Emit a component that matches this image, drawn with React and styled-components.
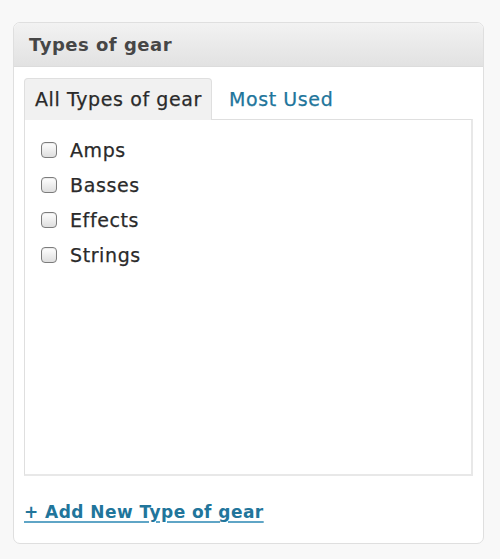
import React, { useState } from 'react';
import styled, { createGlobalStyle } from 'styled-components';

const GlobalStyle = createGlobalStyle`
  html, body {
    margin: 0;
    padding: 0;
    background: #f8f8f8;
  }
  body {
    font-family: "DejaVu Sans", Verdana, sans-serif;
    color: #333;
  }
`;

const terms = ['Amps', 'Basses', 'Effects', 'Strings'];

const App = () => {
  const [tab, setTab] = useState('all');
  const [checked, setChecked] = useState({});

  const toggle = (name) =>
    setChecked((prev) => ({ ...prev, [name]: !prev[name] }));

  return (
    <>
      <GlobalStyle />
      <Page>
        <Panel>
          <Header>Types of gear</Header>
          <Body>
            <Tabs>
              <Tab active={tab === 'all'} onClick={() => setTab('all')}>
                All Types of gear
              </Tab>
              <Tab active={tab === 'pop'} onClick={() => setTab('pop')}>
                Most Used
              </Tab>
            </Tabs>
            <TermBox>
              <TermList>
                {terms.map((name) => (
                  <li key={name}>
                    <TermLabel>
                      <Check
                        type="checkbox"
                        checked={!!checked[name]}
                        onChange={() => toggle(name)}
                      />
                      {name}
                    </TermLabel>
                  </li>
                ))}
              </TermList>
            </TermBox>
            <AddLink href="#">+ Add New Type of gear</AddLink>
          </Body>
        </Panel>
      </Page>
    </>
  );
};

const Page = styled.div`
  padding: 22px 16px 15px 13px;
`;

const Panel = styled.div`
  width: 471px;
  height: 522px;
  box-sizing: border-box;
  border: 1px solid #dfdfdf;
  border-radius: 7px;
  background: #fff;
  overflow: hidden;
  display: flex;
  flex-direction: column;
`;

const Header = styled.h3`
  margin: 0;
  height: 44px;
  box-sizing: border-box;
  padding: 0 15px;
  display: flex;
  align-items: center;
  font-size: 18px;
  letter-spacing: 0.5px;
  font-weight: bold;
  color: #464646;
  background: linear-gradient(to bottom, #f2f2f2, #e2e2e2);
  border-bottom: 1px solid #dcdcdc;
`;

const Body = styled.div`
  padding: 11px 10px 0;
  display: flex;
  flex-direction: column;
`;

const Tabs = styled.ul`
  display: flex;
  gap: 6px;
  margin: 0;
  padding: 0;
  list-style: none;
  position: relative;
  z-index: 1;
`;

const Tab = styled.li`
  height: 42px;
  box-sizing: border-box;
  padding: 0 9px 1px 10px;
  display: flex;
  align-items: center;
  font-size: 19px;
  letter-spacing: 0.6px;
  -webkit-text-stroke: 0.25px currentColor;
  cursor: pointer;
  border: 1px solid ${({ active }) => (active ? '#dfdfdf' : 'transparent')};
  border-bottom: none;
  border-radius: 4px 4px 0 0;
  background: ${({ active }) => (active ? '#f1f1f1' : 'transparent')};
  color: ${({ active }) => (active ? '#2a2a2a' : '#21759b')};
  margin-bottom: -1px;
`;

const TermBox = styled.div`
  height: 357px;
  box-sizing: border-box;
  border-style: solid;
  border-width: 1px 2px 2px 1px;
  border-color: #dfdfdf #e8e8e8 #e8e8e8 #dfdfdf;
  background: #fff;
  padding: 18px 16px;
`;

const TermList = styled.ul`
  margin: 0;
  padding: 0;
  list-style: none;
  display: flex;
  flex-direction: column;
  gap: 11px;
`;

const TermLabel = styled.label`
  display: flex;
  align-items: center;
  gap: 13px;
  height: 24px;
  font-size: 19px;
  letter-spacing: 0.6px;
  -webkit-text-stroke: 0.25px currentColor;
  color: #2a2a2a;
  cursor: pointer;
`;

const Check = styled.input`
  appearance: none;
  margin: 0;
  width: 16px;
  height: 16px;
  box-sizing: border-box;
  border: 1px solid #7c7c7c;
  border-radius: 4px;
  background: linear-gradient(to bottom, #ffffff, #dedede);
  box-shadow: inset 0 1px 1px rgba(0, 0, 0, 0.08);
  cursor: pointer;

  &:checked::after {
    content: '✓';
    display: block;
    font-size: 12px;
    line-height: 14px;
    text-align: center;
    color: #333;
  }
`;

const AddLink = styled.a`
  align-self: flex-start;
  margin-top: 26px;
  font-size: 17px;
  letter-spacing: 0.45px;
  font-weight: bold;
  color: #21759b;
  text-decoration: underline;
  text-decoration-color: #5fa5c6;
  text-decoration-thickness: 2px;
  text-underline-offset: 3px;
`;

export default App;
